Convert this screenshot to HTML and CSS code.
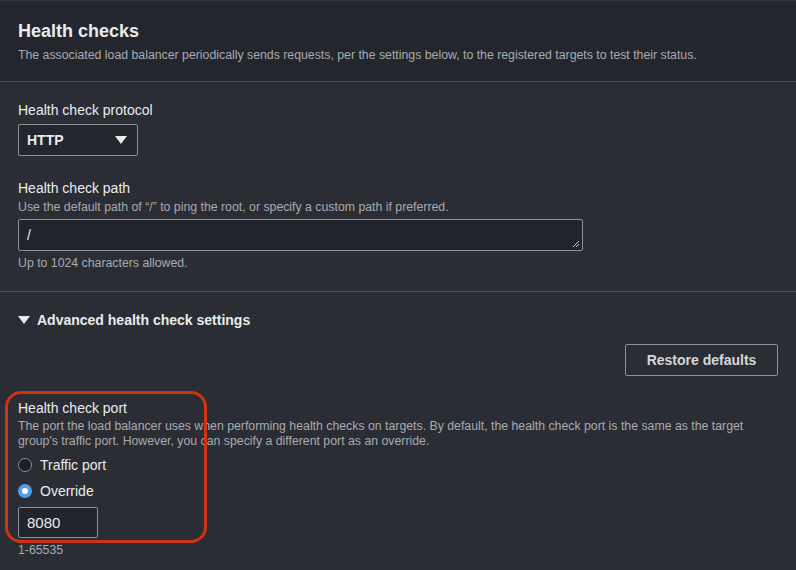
FILE: index.html
```html
<!DOCTYPE html>
<html>
<head>
    <meta charset="utf-8">
    <title>Health checks</title>
    <link rel="stylesheet" href="styles.css">
</head>
<body>
    <div class="panel">
        <div class="panel-header">
            <h2>Health checks</h2>
            <p class="hint">The associated load balancer periodically sends requests, per the settings below, to the registered targets to test their status.</p>
        </div>

        <div class="panel-body">
            <div class="field">
                <label>Health check protocol</label>
                <div class="select">
                    <span>HTTP</span>
                    <svg width="12" height="10" viewBox="0 0 12 10"><path d="M0 1 H12 L6 9 Z" fill="#e9ebed"/></svg>
                </div>
            </div>

            <div class="field">
                <label class="tight">Health check path</label>
                <p class="hint">Use the default path of “/” to ping the root, or specify a custom path if preferred.</p>
                <div class="textbox wide">
                    <span>/</span>
                    <svg class="grip" width="8" height="8" viewBox="0 0 8 8"><path d="M7 1 L1 7 M7 4 L4 7" stroke="#c6c8cc" stroke-width="1"/></svg>
                </div>
                <p class="hint">Up to 1024 characters allowed.</p>
            </div>
        </div>

        <div class="advanced">
            <div class="toggle">
                <svg width="12" height="10" viewBox="0 0 12 10"><path d="M0 1 H12 L6 9 Z" fill="#e9ebed"/></svg>
                <span>Advanced health check settings</span>
            </div>

            <div class="actions">
                <button>Restore defaults</button>
            </div>

            <div class="field port">
                <div class="highlight"></div>
                <label class="tight">Health check port</label>
                <p class="hint desc">The port the load balancer uses when performing health checks on targets. By default, the health check port is the same as the target group's traffic port. However, you can specify a different port as an override.</p>
                <div class="radio"><span class="dot"></span>Traffic port</div>
                <div class="radio"><span class="dot checked"></span>Override</div>
                <div class="textbox small"><span>8080</span></div>
                <p class="hint">1-65535</p>
            </div>
        </div>
    </div>
</body>
</html>
```

FILE: styles.css
```css
body {
    margin: 0;
    background: #2a2d33;
    font-family: "Liberation Sans", Arial, sans-serif;
    color: #e9ebed;
}
.panel-header {
    background: #23262d;
    border-top: 1px solid #33363d;
    border-bottom: 1px solid #4a4e56;
    padding: 20px 18px 18px;
}
h2 {
    margin: 0 0 6px 0;
    font-size: 18px;
    font-weight: bold;
    color: #e9ebed;
}
.hint {
    margin: 0;
    font-size: 12.3px;
    color: #a8abb1;
    line-height: 15px;
}
.panel-body {
    padding: 18px 18px 20px;
    border-bottom: 1px solid #4a4e56;
}
.field {
    margin-bottom: 22px;
}
.field:last-child {
    margin-bottom: 0;
}
label {
    display: block;
    font-size: 14px;
    line-height: 20px;
    margin-bottom: 4px;
}
label.tight {
    margin-bottom: 2px;
}
.select {
    width: 120px;
    height: 32px;
    box-sizing: border-box;
    border: 1px solid #8d9096;
    border-radius: 2px;
    background: #23262d;
    display: flex;
    align-items: center;
    justify-content: space-between;
    padding: 0 10px 0 8px;
    font-size: 14px;
    font-weight: bold;
}
.textbox {
    height: 32px;
    box-sizing: border-box;
    border: 1px solid #8d9096;
    border-radius: 2px;
    background: #21242b;
    display: flex;
    align-items: center;
    padding: 0 8px;
    font-size: 14px;
    position: relative;
    margin: 4px 0 5px;
}
.textbox.wide {
    width: 565px;
}
.textbox.small {
    width: 80px;
    height: 31px;
    margin: 3px 0 5px;
    font-size: 15px;
}
.grip {
    position: absolute;
    right: 2px;
    bottom: 2px;
}
.advanced {
    padding: 20px 18px;
}
.toggle {
    display: flex;
    align-items: center;
    gap: 7px;
    font-size: 14px;
    font-weight: bold;
}
.actions {
    display: flex;
    justify-content: flex-end;
    margin-top: 16px;
}
button {
    background: transparent;
    border: 1px solid #8d9096;
    border-radius: 2px;
    color: #d5d7da;
    font-family: inherit;
    font-size: 14px;
    font-weight: bold;
    padding: 0 20px;
    height: 32px;
    width: 153px;
}
.port {
    position: relative;
    margin-top: 22px;
}
.port label.tight {
    margin-bottom: 1px;
}
.port .desc {
    margin-bottom: 3px;
}
.highlight {
    position: absolute;
    left: -13px;
    top: -7px;
    width: 202px;
    height: 152px;
    box-sizing: border-box;
    border: 3px solid #d13212;
    border-radius: 16px;
}
.radio {
    display: flex;
    align-items: center;
    gap: 8px;
    font-size: 14px;
    height: 26px;
}
.dot {
    width: 14px;
    height: 14px;
    box-sizing: border-box;
    border: 1px solid #8d9096;
    border-radius: 50%;
    background: #1c1f25;
}
.dot.checked {
    border: 4px solid #539fe5;
    background: #ffffff;
}
```
